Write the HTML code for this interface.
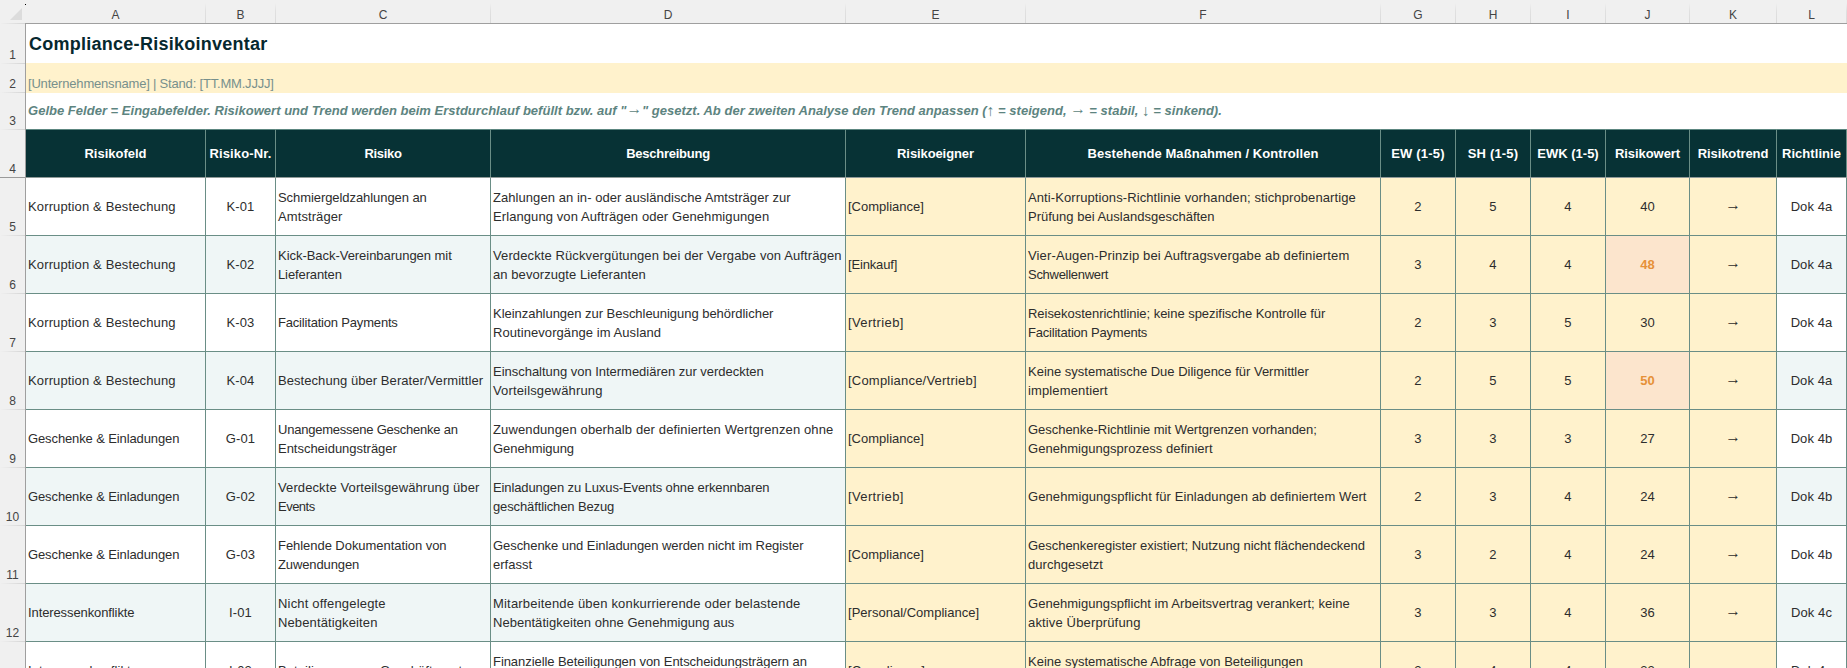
<!DOCTYPE html>
<html lang="de"><head><meta charset="utf-8"><title>Compliance-Risikoinventar</title>
<style>
html,body{margin:0;padding:0}
body{width:1847px;height:668px;overflow:hidden;background:#fff;position:relative;font-family:"Liberation Sans",sans-serif;color:#222}
div{position:absolute;box-sizing:border-box;white-space:nowrap}
.bg{background:#f0f0f0}
.cl{top:0;height:23px;line-height:30px;text-align:center;font-size:12px;color:#444}
.cs{top:3px;width:1px;height:20px;background:linear-gradient(#f0f0f0,#e0e0e0 40%,#dadada)}
.rn{left:0;width:25px;text-align:center;font-size:12px;color:#444;height:14px;line-height:14px}
.rs{left:0;width:25px;height:1px;background:linear-gradient(90deg,#f0f0f0,#d4d4d4)}
.h{background:#073235;color:#fff;font-weight:bold;font-size:13px;text-align:center;top:130px;height:47px;line-height:47px}
.c{font-size:13px;letter-spacing:0.09px;color:#2d2d2d;height:57px;display:flex;align-items:center;padding:0 2px 0 2px;line-height:19px}
.c span{display:block}
.a3{font-size:15.5px;font-style:normal;font-weight:normal;line-height:0;position:relative;top:-1px}
.a3.v{top:0.5px}
.ctr{justify-content:center;text-align:center}
.c .ar{font-size:15.5px;letter-spacing:0;position:relative;top:-2px;line-height:19px}
.y{background:#fff2cc}
.b{background:#eff6f6}
.hot{background:#fce5cd;color:#e69138;font-weight:bold}
.vl{width:1px;background:#6a8e86}
.hl{height:1px;background:#6a8e86;left:26px;width:1821px}
</style></head><body>

<div class="bg" style="left:0;top:0;width:1847px;height:23px"></div>
<div class="bg" style="left:0;top:0;width:25px;height:668px"></div>
<div style="left:0;top:23px;width:25px;height:1px;background:linear-gradient(90deg,#f0f0f0,#d4d4d4)"></div><div style="left:25px;top:23px;width:1822px;height:1px;background:#9f9f9f"></div>
<div style="left:25px;top:23px;width:1px;height:645px;background:#9f9f9f"></div>
<div style="left:10px;top:8px;width:0;height:0;border-left:12px solid transparent;border-bottom:12px solid #dcdcdc"></div>
<div style="left:25px;top:4px;width:1px;height:1px;background:#000"></div>
<div class="cl" style="left:26px;width:179px">A</div>
<div class="cs" style="left:205px"></div>
<div class="cl" style="left:206px;width:69px">B</div>
<div class="cs" style="left:275px"></div>
<div class="cl" style="left:276px;width:214px">C</div>
<div class="cs" style="left:490px"></div>
<div class="cl" style="left:491px;width:354px">D</div>
<div class="cs" style="left:845px"></div>
<div class="cl" style="left:846px;width:179px">E</div>
<div class="cs" style="left:1025px"></div>
<div class="cl" style="left:1026px;width:354px">F</div>
<div class="cs" style="left:1380px"></div>
<div class="cl" style="left:1381px;width:74px">G</div>
<div class="cs" style="left:1455px"></div>
<div class="cl" style="left:1456px;width:74px">H</div>
<div class="cs" style="left:1530px"></div>
<div class="cl" style="left:1531px;width:74px">I</div>
<div class="cs" style="left:1605px"></div>
<div class="cl" style="left:1606px;width:83px">J</div>
<div class="cs" style="left:1689px"></div>
<div class="cl" style="left:1690px;width:86px">K</div>
<div class="cs" style="left:1776px"></div>
<div class="cl" style="left:1777px;width:69px">L</div>
<div class="cs" style="left:1846px"></div>
<div class="rn" style="top:48px">1</div>
<div class="rs" style="top:63px"></div>
<div class="rn" style="top:77px">2</div>
<div class="rs" style="top:92px"></div>
<div class="rn" style="top:114px">3</div>
<div class="rs" style="top:129px"></div>
<div class="rn" style="top:162px">4</div>
<div class="rs" style="top:177px;background:#9a9a9a"></div>
<div class="rn" style="top:220px">5</div>
<div class="rs" style="top:235px"></div>
<div class="rn" style="top:278px">6</div>
<div class="rs" style="top:293px"></div>
<div class="rn" style="top:336px">7</div>
<div class="rs" style="top:351px"></div>
<div class="rn" style="top:394px">8</div>
<div class="rs" style="top:409px"></div>
<div class="rn" style="top:452px">9</div>
<div class="rs" style="top:467px"></div>
<div class="rn" style="top:510px">10</div>
<div class="rs" style="top:525px"></div>
<div class="rn" style="top:568px">11</div>
<div class="rs" style="top:583px"></div>
<div class="rn" style="top:626px">12</div>
<div class="rs" style="top:641px"></div>
<div class="rn" style="top:684px">13</div>
<div style="left:26px;top:63px;width:1821px;height:30px;background:#fff2cc"></div>
<div style="left:29px;top:25px;height:39px;line-height:39px;font-size:18px;letter-spacing:0.26px;font-weight:bold;color:#06282e">Compliance-Risikoinventar</div>
<div style="left:28px;top:74px;height:20px;line-height:20px;font-size:13px;letter-spacing:-0.19px;color:#77908c">[Unternehmensname] | Stand: [TT.MM.JJJJ]</div>
<div style="left:28px;top:101px;height:20px;line-height:20px;font-size:13px;letter-spacing:0.018px;font-weight:bold;font-style:italic;color:#5d8480">Gelbe Felder = Eingabefelder. Risikowert und Trend werden beim Erstdurchlauf befüllt bzw. auf "<span class="a3">→</span>" gesetzt. Ab der zweiten Analyse den Trend anpassen (<span class="a3 v">↑</span> = steigend, <span class="a3">→</span> = stabil, <span class="a3 v">↓</span> = sinkend).</div>
<div style="left:26px;top:129px;width:1821px;height:1px;background:#5c8680"></div><div style="left:26px;top:130px;width:1820px;height:47px;background:#073235"></div>
<div class="h" style="left:26px;width:179px;letter-spacing:0px">Risikofeld</div>
<div class="h" style="left:206px;width:69px;letter-spacing:0.14px">Risiko-Nr.</div>
<div class="h" style="left:276px;width:214px;letter-spacing:-0.3px">Risiko</div>
<div class="h" style="left:491px;width:354px;letter-spacing:-0.25px">Beschreibung</div>
<div class="h" style="left:846px;width:179px;letter-spacing:-0.1px">Risikoeigner</div>
<div class="h" style="left:1026px;width:354px;letter-spacing:0.06px">Bestehende Maßnahmen / Kontrollen</div>
<div class="h" style="left:1381px;width:74px;letter-spacing:0.18px">EW (1-5)</div>
<div class="h" style="left:1456px;width:74px;letter-spacing:0.18px">SH (1-5)</div>
<div class="h" style="left:1531px;width:74px;letter-spacing:0px">EWK (1-5)</div>
<div class="h" style="left:1606px;width:83px;letter-spacing:-0.05px">Risikowert</div>
<div class="h" style="left:1690px;width:86px;letter-spacing:-0.08px">Risikotrend</div>
<div class="h" style="left:1777px;width:69px;letter-spacing:0.05px">Richtlinie</div>
<div class="c" style="left:26px;top:178px;width:179px"><p style="margin:0"><span style="letter-spacing:0.135px">Korruption &amp; Bestechung</span></p></div>
<div class="c ctr" style="left:206px;top:178px;width:69px"><p style="margin:0"><span>K-01</span></p></div>
<div class="c" style="left:276px;top:178px;width:214px"><p style="margin:0"><span style="letter-spacing:-0.069px">Schmiergeldzahlungen an</span><span style="letter-spacing:0.090px">Amtsträger</span></p></div>
<div class="c" style="left:491px;top:178px;width:354px"><p style="margin:0"><span style="letter-spacing:0.059px">Zahlungen an in- oder ausländische Amtsträger zur</span><span style="letter-spacing:0.090px">Erlangung von Aufträgen oder Genehmigungen</span></p></div>
<div class="c y" style="left:846px;top:178px;width:179px"><p style="margin:0"><span style="letter-spacing:-0.001px">[Compliance]</span></p></div>
<div class="c y" style="left:1026px;top:178px;width:354px"><p style="margin:0"><span style="letter-spacing:0.099px">Anti-Korruptions-Richtlinie vorhanden; stichprobenartige</span><span style="letter-spacing:0.004px">Prüfung bei Auslandsgeschäften</span></p></div>
<div class="c ctr y" style="left:1381px;top:178px;width:74px"><p style="margin:0"><span>2</span></p></div>
<div class="c ctr y" style="left:1456px;top:178px;width:74px"><p style="margin:0"><span>5</span></p></div>
<div class="c ctr y" style="left:1531px;top:178px;width:74px"><p style="margin:0"><span>4</span></p></div>
<div class="c ctr y" style="left:1606px;top:178px;width:83px"><p style="margin:0"><span>40</span></p></div>
<div class="c ctr y" style="left:1690px;top:178px;width:86px"><p style="margin:0"><span class="ar">→</span></p></div>
<div class="c ctr" style="left:1777px;top:178px;width:69px"><p style="margin:0"><span>Dok 4a</span></p></div>
<div class="c b" style="left:26px;top:236px;width:179px"><p style="margin:0"><span style="letter-spacing:0.135px">Korruption &amp; Bestechung</span></p></div>
<div class="c ctr b" style="left:206px;top:236px;width:69px"><p style="margin:0"><span>K-02</span></p></div>
<div class="c b" style="left:276px;top:236px;width:214px"><p style="margin:0"><span style="letter-spacing:-0.040px">Kick-Back-Vereinbarungen mit</span><span style="letter-spacing:-0.110px">Lieferanten</span></p></div>
<div class="c b" style="left:491px;top:236px;width:354px"><p style="margin:0"><span style="letter-spacing:0.109px">Verdeckte Rückvergütungen bei der Vergabe von Aufträgen</span><span style="letter-spacing:0.069px">an bevorzugte Lieferanten</span></p></div>
<div class="c y" style="left:846px;top:236px;width:179px"><p style="margin:0"><span style="letter-spacing:-0.160px">[Einkauf]</span></p></div>
<div class="c y" style="left:1026px;top:236px;width:354px"><p style="margin:0"><span style="letter-spacing:0.138px">Vier-Augen-Prinzip bei Auftragsvergabe ab definiertem</span><span style="letter-spacing:-0.285px">Schwellenwert</span></p></div>
<div class="c ctr y" style="left:1381px;top:236px;width:74px"><p style="margin:0"><span>3</span></p></div>
<div class="c ctr y" style="left:1456px;top:236px;width:74px"><p style="margin:0"><span>4</span></p></div>
<div class="c ctr y" style="left:1531px;top:236px;width:74px"><p style="margin:0"><span>4</span></p></div>
<div class="c ctr y hot" style="left:1606px;top:236px;width:83px"><p style="margin:0"><span>48</span></p></div>
<div class="c ctr y" style="left:1690px;top:236px;width:86px"><p style="margin:0"><span class="ar">→</span></p></div>
<div class="c ctr b" style="left:1777px;top:236px;width:69px"><p style="margin:0"><span>Dok 4a</span></p></div>
<div class="c" style="left:26px;top:294px;width:179px"><p style="margin:0"><span style="letter-spacing:0.135px">Korruption &amp; Bestechung</span></p></div>
<div class="c ctr" style="left:206px;top:294px;width:69px"><p style="margin:0"><span>K-03</span></p></div>
<div class="c" style="left:276px;top:294px;width:214px"><p style="margin:0"><span style="letter-spacing:-0.185px">Facilitation Payments</span></p></div>
<div class="c" style="left:491px;top:294px;width:354px"><p style="margin:0"><span style="letter-spacing:-0.032px">Kleinzahlungen zur Beschleunigung behördlicher</span><span style="letter-spacing:0.070px">Routinevorgänge im Ausland</span></p></div>
<div class="c y" style="left:846px;top:294px;width:179px"><p style="margin:0"><span style="letter-spacing:0.368px">[Vertrieb]</span></p></div>
<div class="c y" style="left:1026px;top:294px;width:354px"><p style="margin:0"><span style="letter-spacing:-0.033px">Reisekostenrichtlinie; keine spezifische Kontrolle für</span><span style="letter-spacing:-0.210px">Facilitation Payments</span></p></div>
<div class="c ctr y" style="left:1381px;top:294px;width:74px"><p style="margin:0"><span>2</span></p></div>
<div class="c ctr y" style="left:1456px;top:294px;width:74px"><p style="margin:0"><span>3</span></p></div>
<div class="c ctr y" style="left:1531px;top:294px;width:74px"><p style="margin:0"><span>5</span></p></div>
<div class="c ctr y" style="left:1606px;top:294px;width:83px"><p style="margin:0"><span>30</span></p></div>
<div class="c ctr y" style="left:1690px;top:294px;width:86px"><p style="margin:0"><span class="ar">→</span></p></div>
<div class="c ctr" style="left:1777px;top:294px;width:69px"><p style="margin:0"><span>Dok 4a</span></p></div>
<div class="c b" style="left:26px;top:352px;width:179px"><p style="margin:0"><span style="letter-spacing:0.135px">Korruption &amp; Bestechung</span></p></div>
<div class="c ctr b" style="left:206px;top:352px;width:69px"><p style="margin:0"><span>K-04</span></p></div>
<div class="c b" style="left:276px;top:352px;width:214px"><p style="margin:0"><span style="letter-spacing:0.060px">Bestechung über Berater/Vermittler</span></p></div>
<div class="c b" style="left:491px;top:352px;width:354px"><p style="margin:0"><span style="letter-spacing:-0.024px">Einschaltung von Intermediären zur verdeckten</span><span style="letter-spacing:0.152px">Vorteilsgewährung</span></p></div>
<div class="c y" style="left:846px;top:352px;width:179px"><p style="margin:0"><span style="letter-spacing:0.215px">[Compliance/Vertrieb]</span></p></div>
<div class="c y" style="left:1026px;top:352px;width:354px"><p style="margin:0"><span style="letter-spacing:-0.006px">Keine systematische Due Diligence für Vermittler</span><span style="letter-spacing:0.132px">implementiert</span></p></div>
<div class="c ctr y" style="left:1381px;top:352px;width:74px"><p style="margin:0"><span>2</span></p></div>
<div class="c ctr y" style="left:1456px;top:352px;width:74px"><p style="margin:0"><span>5</span></p></div>
<div class="c ctr y" style="left:1531px;top:352px;width:74px"><p style="margin:0"><span>5</span></p></div>
<div class="c ctr y hot" style="left:1606px;top:352px;width:83px"><p style="margin:0"><span>50</span></p></div>
<div class="c ctr y" style="left:1690px;top:352px;width:86px"><p style="margin:0"><span class="ar">→</span></p></div>
<div class="c ctr b" style="left:1777px;top:352px;width:69px"><p style="margin:0"><span>Dok 4a</span></p></div>
<div class="c" style="left:26px;top:410px;width:179px"><p style="margin:0"><span style="letter-spacing:-0.115px">Geschenke &amp; Einladungen</span></p></div>
<div class="c ctr" style="left:206px;top:410px;width:69px"><p style="margin:0"><span>G-01</span></p></div>
<div class="c" style="left:276px;top:410px;width:214px"><p style="margin:0"><span style="letter-spacing:-0.230px">Unangemessene Geschenke an</span><span style="letter-spacing:-0.021px">Entscheidungsträger</span></p></div>
<div class="c" style="left:491px;top:410px;width:354px"><p style="margin:0"><span style="letter-spacing:0.128px">Zuwendungen oberhalb der definierten Wertgrenzen ohne</span><span style="letter-spacing:-0.060px">Genehmigung</span></p></div>
<div class="c y" style="left:846px;top:410px;width:179px"><p style="margin:0"><span style="letter-spacing:-0.001px">[Compliance]</span></p></div>
<div class="c y" style="left:1026px;top:410px;width:354px"><p style="margin:0"><span style="letter-spacing:-0.030px">Geschenke-Richtlinie mit Wertgrenzen vorhanden;</span><span style="letter-spacing:0.036px">Genehmigungsprozess definiert</span></p></div>
<div class="c ctr y" style="left:1381px;top:410px;width:74px"><p style="margin:0"><span>3</span></p></div>
<div class="c ctr y" style="left:1456px;top:410px;width:74px"><p style="margin:0"><span>3</span></p></div>
<div class="c ctr y" style="left:1531px;top:410px;width:74px"><p style="margin:0"><span>3</span></p></div>
<div class="c ctr y" style="left:1606px;top:410px;width:83px"><p style="margin:0"><span>27</span></p></div>
<div class="c ctr y" style="left:1690px;top:410px;width:86px"><p style="margin:0"><span class="ar">→</span></p></div>
<div class="c ctr" style="left:1777px;top:410px;width:69px"><p style="margin:0"><span>Dok 4b</span></p></div>
<div class="c b" style="left:26px;top:468px;width:179px"><p style="margin:0"><span style="letter-spacing:-0.115px">Geschenke &amp; Einladungen</span></p></div>
<div class="c ctr b" style="left:206px;top:468px;width:69px"><p style="margin:0"><span>G-02</span></p></div>
<div class="c b" style="left:276px;top:468px;width:214px"><p style="margin:0"><span style="letter-spacing:0.106px">Verdeckte Vorteilsgewährung über</span><span style="letter-spacing:-0.510px">Events</span></p></div>
<div class="c b" style="left:491px;top:468px;width:354px"><p style="margin:0"><span style="letter-spacing:-0.108px">Einladungen zu Luxus-Events ohne erkennbaren</span><span style="letter-spacing:-0.121px">geschäftlichen Bezug</span></p></div>
<div class="c y" style="left:846px;top:468px;width:179px"><p style="margin:0"><span style="letter-spacing:0.368px">[Vertrieb]</span></p></div>
<div class="c y" style="left:1026px;top:468px;width:354px"><p style="margin:0"><span style="letter-spacing:0.090px">Genehmigungspflicht für Einladungen ab definiertem Wert</span></p></div>
<div class="c ctr y" style="left:1381px;top:468px;width:74px"><p style="margin:0"><span>2</span></p></div>
<div class="c ctr y" style="left:1456px;top:468px;width:74px"><p style="margin:0"><span>3</span></p></div>
<div class="c ctr y" style="left:1531px;top:468px;width:74px"><p style="margin:0"><span>4</span></p></div>
<div class="c ctr y" style="left:1606px;top:468px;width:83px"><p style="margin:0"><span>24</span></p></div>
<div class="c ctr y" style="left:1690px;top:468px;width:86px"><p style="margin:0"><span class="ar">→</span></p></div>
<div class="c ctr b" style="left:1777px;top:468px;width:69px"><p style="margin:0"><span>Dok 4b</span></p></div>
<div class="c" style="left:26px;top:526px;width:179px"><p style="margin:0"><span style="letter-spacing:-0.115px">Geschenke &amp; Einladungen</span></p></div>
<div class="c ctr" style="left:206px;top:526px;width:69px"><p style="margin:0"><span>G-03</span></p></div>
<div class="c" style="left:276px;top:526px;width:214px"><p style="margin:0"><span style="letter-spacing:-0.050px">Fehlende Dokumentation von</span><span style="letter-spacing:-0.110px">Zuwendungen</span></p></div>
<div class="c" style="left:491px;top:526px;width:354px"><p style="margin:0"><span style="letter-spacing:-0.063px">Geschenke und Einladungen werden nicht im Register</span><span style="letter-spacing:0.007px">erfasst</span></p></div>
<div class="c y" style="left:846px;top:526px;width:179px"><p style="margin:0"><span style="letter-spacing:-0.001px">[Compliance]</span></p></div>
<div class="c y" style="left:1026px;top:526px;width:354px"><p style="margin:0"><span style="letter-spacing:-0.035px">Geschenkeregister existiert; Nutzung nicht flächendeckend</span><span style="letter-spacing:0.045px">durchgesetzt</span></p></div>
<div class="c ctr y" style="left:1381px;top:526px;width:74px"><p style="margin:0"><span>3</span></p></div>
<div class="c ctr y" style="left:1456px;top:526px;width:74px"><p style="margin:0"><span>2</span></p></div>
<div class="c ctr y" style="left:1531px;top:526px;width:74px"><p style="margin:0"><span>4</span></p></div>
<div class="c ctr y" style="left:1606px;top:526px;width:83px"><p style="margin:0"><span>24</span></p></div>
<div class="c ctr y" style="left:1690px;top:526px;width:86px"><p style="margin:0"><span class="ar">→</span></p></div>
<div class="c ctr" style="left:1777px;top:526px;width:69px"><p style="margin:0"><span>Dok 4b</span></p></div>
<div class="c b" style="left:26px;top:584px;width:179px"><p style="margin:0"><span style="letter-spacing:-0.104px">Interessenkonflikte</span></p></div>
<div class="c ctr b" style="left:206px;top:584px;width:69px"><p style="margin:0"><span>I-01</span></p></div>
<div class="c b" style="left:276px;top:584px;width:214px"><p style="margin:0"><span style="letter-spacing:0.178px">Nicht offengelegte</span><span style="letter-spacing:0.123px">Nebentätigkeiten</span></p></div>
<div class="c b" style="left:491px;top:584px;width:354px"><p style="margin:0"><span style="letter-spacing:0.184px">Mitarbeitende üben konkurrierende oder belastende</span><span style="letter-spacing:0.034px">Nebentätigkeiten ohne Genehmigung aus</span></p></div>
<div class="c y" style="left:846px;top:584px;width:179px"><p style="margin:0"><span style="letter-spacing:0.015px">[Personal/Compliance]</span></p></div>
<div class="c y" style="left:1026px;top:584px;width:354px"><p style="margin:0"><span style="letter-spacing:0.043px">Genehmigungspflicht im Arbeitsvertrag verankert; keine</span><span style="letter-spacing:0.149px">aktive Überprüfung</span></p></div>
<div class="c ctr y" style="left:1381px;top:584px;width:74px"><p style="margin:0"><span>3</span></p></div>
<div class="c ctr y" style="left:1456px;top:584px;width:74px"><p style="margin:0"><span>3</span></p></div>
<div class="c ctr y" style="left:1531px;top:584px;width:74px"><p style="margin:0"><span>4</span></p></div>
<div class="c ctr y" style="left:1606px;top:584px;width:83px"><p style="margin:0"><span>36</span></p></div>
<div class="c ctr y" style="left:1690px;top:584px;width:86px"><p style="margin:0"><span class="ar">→</span></p></div>
<div class="c ctr b" style="left:1777px;top:584px;width:69px"><p style="margin:0"><span>Dok 4c</span></p></div>
<div class="c" style="left:26px;top:642px;width:179px"><p style="margin:0"><span>Interessenkonflikte</span></p></div>
<div class="c ctr" style="left:206px;top:642px;width:69px"><p style="margin:0"><span>I-02</span></p></div>
<div class="c" style="left:276px;top:642px;width:214px"><p style="margin:0"><span>Beteiligungen an Geschäftspartnern</span></p></div>
<div class="c" style="left:491px;top:642px;width:354px"><p style="margin:0"><span style="letter-spacing:-0.064px">Finanzielle Beteiligungen von Entscheidungsträgern an</span><span>Lieferanten oder Kunden</span></p></div>
<div class="c y" style="left:846px;top:642px;width:179px"><p style="margin:0"><span>[Compliance]</span></p></div>
<div class="c y" style="left:1026px;top:642px;width:354px"><p style="margin:0"><span style="letter-spacing:0.010px">Keine systematische Abfrage von Beteiligungen</span><span>implementiert</span></p></div>
<div class="c ctr y" style="left:1381px;top:642px;width:74px"><p style="margin:0"><span>2</span></p></div>
<div class="c ctr y" style="left:1456px;top:642px;width:74px"><p style="margin:0"><span>4</span></p></div>
<div class="c ctr y" style="left:1531px;top:642px;width:74px"><p style="margin:0"><span>4</span></p></div>
<div class="c ctr y" style="left:1606px;top:642px;width:83px"><p style="margin:0"><span>32</span></p></div>
<div class="c ctr y" style="left:1690px;top:642px;width:86px"><p style="margin:0"><span class="ar">→</span></p></div>
<div class="c ctr" style="left:1777px;top:642px;width:69px"><p style="margin:0"><span>Dok 4c</span></p></div>
<div class="vl" style="left:205px;top:129px;height:539px"></div>
<div class="vl" style="left:275px;top:129px;height:539px"></div>
<div class="vl" style="left:490px;top:129px;height:539px"></div>
<div class="vl" style="left:845px;top:129px;height:539px"></div>
<div class="vl" style="left:1025px;top:129px;height:539px"></div>
<div class="vl" style="left:1380px;top:129px;height:539px"></div>
<div class="vl" style="left:1455px;top:129px;height:539px"></div>
<div class="vl" style="left:1530px;top:129px;height:539px"></div>
<div class="vl" style="left:1605px;top:129px;height:539px"></div>
<div class="vl" style="left:1689px;top:129px;height:539px"></div>
<div class="vl" style="left:1776px;top:129px;height:539px"></div>
<div class="vl" style="left:1846px;top:129px;height:539px"></div>
<div class="hl" style="top:177px;background:#8f9a98"></div>
<div class="hl" style="top:235px"></div>
<div class="hl" style="top:293px"></div>
<div class="hl" style="top:351px"></div>
<div class="hl" style="top:409px"></div>
<div class="hl" style="top:467px"></div>
<div class="hl" style="top:525px"></div>
<div class="hl" style="top:583px"></div>
<div class="hl" style="top:641px"></div>
</body></html>
